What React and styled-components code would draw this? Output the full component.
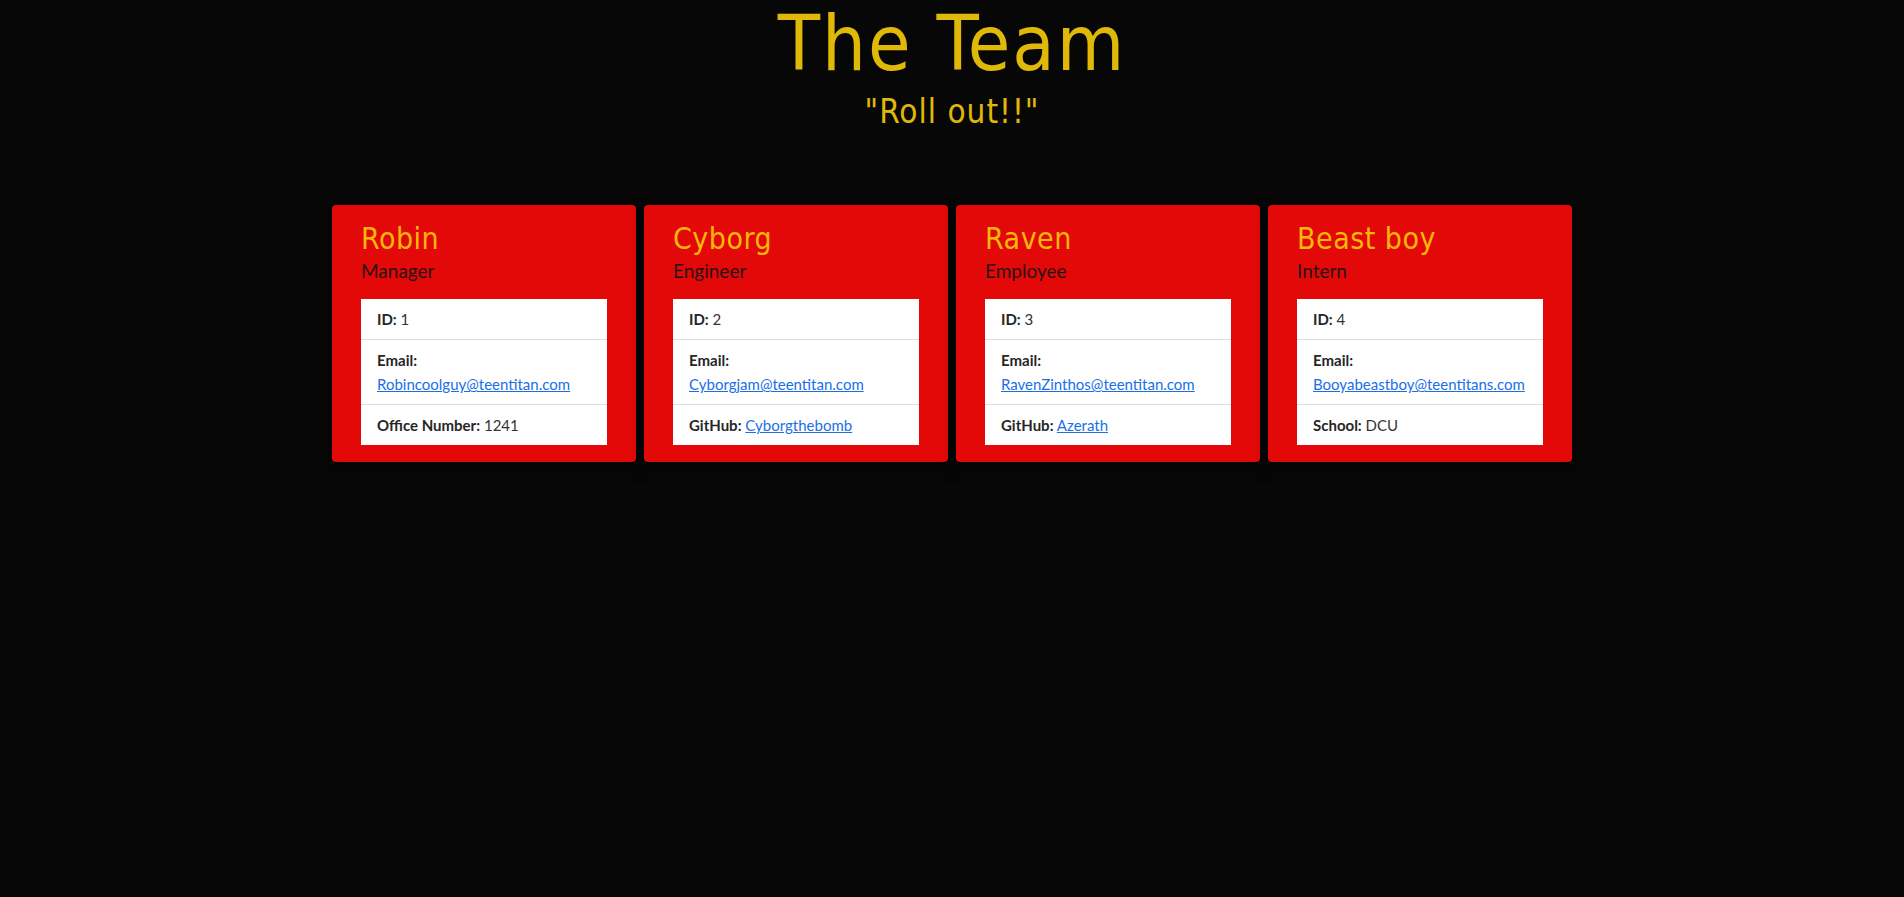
import React from "react";
import styled, { createGlobalStyle } from "styled-components";

const GlobalStyle = createGlobalStyle`
  html, body {
    margin: 0;
    padding: 0;
    background: #070707;
  }
  body {
    font-family: Lato, "Liberation Sans", sans-serif;
  }
`;

const PageStyled = styled.div`
  min-height: 897px;
  background: #070707;
`;

const HeaderStyled = styled.header`
  text-align: center;
  color: #e0b808;
  font-family: "DejaVu Sans Condensed", "DejaVu Sans", sans-serif;
  font-stretch: condensed;
`;

const Title = styled.h1`
  margin: 0;
  font-size: 77px;
  font-weight: normal;
  line-height: 88px;
  letter-spacing: 2px;
`;

const Subtitle = styled.h2`
  margin: 5px 0 0;
  font-size: 33px;
  font-weight: normal;
  line-height: 38px;
  letter-spacing: 1px;
`;

const CardRow = styled.main`
  display: flex;
  justify-content: center;
  gap: 8px;
  margin-top: 74px;
`;

const Card = styled.div`
  width: 304px;
  box-sizing: border-box;
  padding: 16px 29px 17px 29px;
  background: #e40909;
  border-radius: 4px;
  box-shadow: 0 6px 14px rgba(0, 0, 0, 0.55);
`;

const Name = styled.h3`
  margin: 0;
  color: #f6b70a;
  font-family: "DejaVu Sans Condensed", "DejaVu Sans", sans-serif;
  font-stretch: condensed;
  font-size: 30px;
  font-weight: normal;
  line-height: 35px;
  letter-spacing: 0.5px;
`;

const Role = styled.div`
  margin-top: 3px;
  color: #2a1111;
  font-size: 19px;
  line-height: 24px;
`;

const InfoList = styled.ul`
  list-style: none;
  margin: 16px 0 0;
  padding: 0;
  background: #fff;
`;

const InfoItem = styled.li`
  padding: 8px 16px;
  font-size: 15px;
  line-height: 24px;
  color: #333;
  border-bottom: 1px solid #dcdcdc;

  &:last-child {
    border-bottom: none;
  }

  b {
    color: #262626;
  }

  a {
    color: #1a6fe8;
  }
`;

const team = [
  {
    name: "Robin",
    role: "Manager",
    id: 1,
    email: "Robincoolguy@teentitan.com",
    extra: { label: "Office Number", value: "1241" },
  },
  {
    name: "Cyborg",
    role: "Engineer",
    id: 2,
    email: "Cyborgjam@teentitan.com",
    extra: { label: "GitHub", value: "Cyborgthebomb", link: true },
  },
  {
    name: "Raven",
    role: "Employee",
    id: 3,
    email: "RavenZinthos@teentitan.com",
    extra: { label: "GitHub", value: "Azerath", link: true },
  },
  {
    name: "Beast boy",
    role: "Intern",
    id: 4,
    email: "Booyabeastboy@teentitans.com",
    extra: { label: "School", value: "DCU" },
  },
];

const MemberCard = ({ member }) => (
  <Card>
    <Name>{member.name}</Name>
    <Role>{member.role}</Role>
    <InfoList>
      <InfoItem>
        <b>ID:</b> {member.id}
      </InfoItem>
      <InfoItem>
        <b>Email:</b>
        <br />
        <a href={`mailto:${member.email}`}>{member.email}</a>
      </InfoItem>
      <InfoItem>
        <b>{member.extra.label}:</b>{" "}
        {member.extra.link ? (
          <a href="#">{member.extra.value}</a>
        ) : (
          member.extra.value
        )}
      </InfoItem>
    </InfoList>
  </Card>
);

const App = () => (
  <PageStyled>
    <GlobalStyle />
    <HeaderStyled>
      <Title>The Team</Title>
      <Subtitle>"Roll out!!"</Subtitle>
    </HeaderStyled>
    <CardRow>
      {team.map((m) => (
        <MemberCard key={m.id} member={m} />
      ))}
    </CardRow>
  </PageStyled>
);

export default App;
